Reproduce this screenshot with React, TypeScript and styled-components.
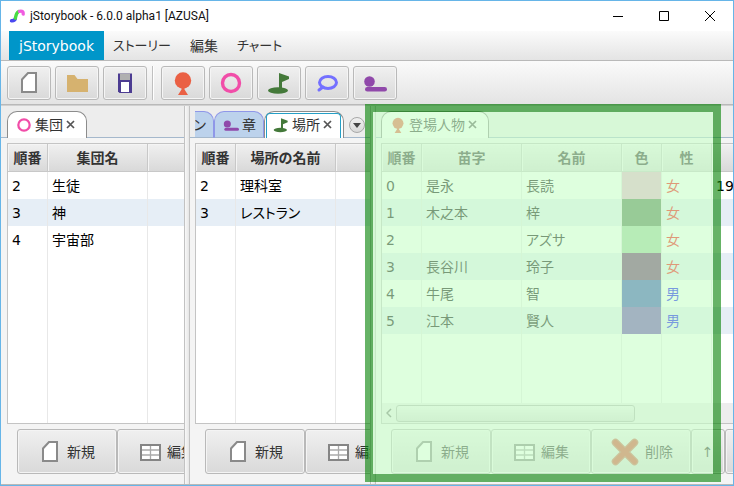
import React from "react";
import styled, { createGlobalStyle, css } from "styled-components";

const Global = createGlobalStyle`
  * { box-sizing: border-box; }
  body { margin: 0; }
  body, button {
    font-family: "DejaVu Sans", "Noto Sans CJK JP", sans-serif;
    font-size: 14px;
    line-height: 20px;
    color: #333;
  }
`;

const edge = "#b9b9b9";
const bevel = "linear-gradient(#f0f0f0, #d9d9d9)";

const Shell = styled.div`
  display: flex;
  flex-direction: column;
  height: 100vh;
  min-height: 360px;
  border: 1px solid #66b5e8;
  background: #f4f4f4;
  overflow: hidden;
`;

const TitleBar = styled.header`
  display: flex;
  align-items: center;
  height: 30px;
  flex: none;
  padding-left: 8px;
  background: #fff;
`;

const Title = styled.h1`
  flex: 1;
  margin: 0 0 0 4px;
  font: 400 12px/20px Roboto, sans-serif;
  color: #111;
  white-space: nowrap;
`;

const WindowButton = styled.button`
  display: grid;
  place-items: center;
  width: 46px;
  height: 30px;
  padding: 0;
  border: 0;
  background: transparent;
`;

const MenuBar = styled.nav`
  display: flex;
  flex: none;
  height: 30px;
  padding-left: 8px;
  border-bottom: 1px solid ${edge};
  background: linear-gradient(#fbfbfb, #e4e4e4);
`;

const MenuItem = styled.button<{ $active?: boolean; $kana?: boolean }>`
  padding: 0 ${(p) => (p.$kana ? 9 : 10)}px;
  border: 0;
  background: ${(p) => (p.$active ? "#0096c9" : "transparent")};
  color: ${(p) => (p.$active ? "#fff" : "#333")};
  font-size: ${(p) => (p.$kana ? 13 : 14)}px;
  font-feature-settings: "palt";
  white-space: nowrap;
`;

const ToolBar = styled.div`
  display: flex;
  flex: none;
  align-items: center;
  gap: 4px;
  height: 44px;
  padding: 0 6px;
  border-bottom: 1px solid ${edge};
  background: linear-gradient(#fafafa, #e4e4e4);
`;

const ToolButton = styled.button`
  display: grid;
  place-items: center;
  width: 44px;
  height: 34px;
  padding: 0;
  border: 1px solid ${edge};
  border-radius: 3px;
  background: ${bevel};
  box-shadow: inset 0 0 0 1px #f5f5f5;
`;

const Separator = styled.div`
  width: 2px;
  height: 34px;
  margin: 0 3px 0 1px;
  border-left: 1px solid #c0c0c0;
  background: #fff;
`;

const Workspace = styled.main`
  display: grid;
  grid-template-columns: 183fr 6px 180fr 6px 357fr;
  grid-template-rows: minmax(0, 1fr);
  flex: 1;
  min-height: 0;
  border-top: 1px solid #d0d0d0;
  border-bottom: 1px solid ${edge};
`;

const Divider = styled.div`
  border: solid #c2c2c2;
  border-width: 0 1px;
  background: linear-gradient(90deg, #f8f8f8, #e6e6e6);
`;

const Cell = styled.div`
  position: relative;
  display: flex;
  min-width: 0;
`;

const Panel = styled.section`
  display: flex;
  flex-direction: column;
  flex: 1;
  min-width: 0;
  overflow: hidden;
`;

const TabHeader = styled.div<{ $inset: number }>`
  display: flex;
  flex: none;
  align-items: flex-end;
  height: 32px;
  padding-left: ${(p) => p.$inset}px;
  border-bottom: 1px solid #a5b8cc;
  background: #ededed;
`;

const TabList = styled.div`
  display: flex;
  margin-bottom: -1px;
  overflow: hidden;
`;

const Tab = styled.button<{ $kind?: "idle" | "focus"; $clip?: boolean }>`
  position: relative;
  display: flex;
  flex: none;
  align-items: center;
  gap: 3px;
  height: 27px;
  padding: 0 11px 1px 8px;
  border: 1px solid #8c8c8c;
  border-bottom: 0;
  border-radius: 10px 10px 0 0;
  background: #fff;
  white-space: nowrap;
  ${(p) =>
    p.$kind === "idle" &&
    css`
      padding: 0 7px 0 8px;
      border-color: #8f97e8;
      border-bottom: 1px solid #a5b8cc;
      background: #bcd2ec;
    `}
  ${(p) =>
    p.$kind === "focus" &&
    css`
      &::after {
        content: "";
        position: absolute;
        inset: 1px 2px 0 1px;
        border: solid #259fc6;
        border-width: 1px 1px 0;
        border-radius: 4px 4px 0 0;
      }
    `}
  ${(p) =>
    p.$clip &&
    css`
      justify-content: flex-end;
      width: 19px;
      padding-left: 0;
      border-left: 0;
      border-top-left-radius: 0;
      overflow: hidden;
      font-feature-settings: "palt";
    `}
`;

const TabMenu = styled.button`
  display: grid;
  place-items: center;
  width: 16px;
  height: 16px;
  margin: 0 0 4px 5px;
  padding: 0;
  border: 1px solid #a8a8a8;
  border-radius: 50%;
  background: ${bevel};
`;

const Body = styled.div<{ $inset: number }>`
  display: flex;
  flex-direction: column;
  flex: 1;
  min-height: 0;
  padding: 5px 0 10px ${(p) => p.$inset}px;
`;

const TableBox = styled.div`
  display: flex;
  flex-direction: column;
  flex: 1;
  min-height: 0;
  border: solid #c4c4c4;
  border-width: 1px 0 1px 1px;
  background: #fff;
  overflow: hidden;
`;

const TableArea = styled.div`
  flex: 1;
  min-height: 0;
  overflow: hidden;
`;

const Grid = styled.table`
  width: 100%;
  height: 100%;
  table-layout: fixed;
  border-collapse: separate;
  border-spacing: 0;
`;

const Head = styled.th<{ $w?: number }>`
  width: ${(p) => (p.$w ? `${p.$w}px` : "auto")};
  height: 28px;
  padding: 0;
  border: solid #c8c8c8;
  border-width: 0 1px 1px 0;
  background: ${bevel};
  box-shadow: inset 1px 1px 0 #f4f4f4;
  font-weight: 700;
  white-space: nowrap;
  &:last-child {
    border-right: 0;
  }
`;

const Row = styled.tr<{ $odd: boolean }>`
  height: 27px;
  background: ${(p) => (p.$odd ? "#e6eef6" : "#fff")};
`;

const Data = styled.td<{ $ink?: string; $fill?: string }>`
  padding: 0 0 0 4px;
  border-right: 1px solid #e8e8e8;
  color: ${(p) => p.$ink ?? "#000"};
  background: ${(p) => p.$fill ?? "transparent"};
  font-feature-settings: "palt";
  white-space: nowrap;
  &:last-child {
    border-right: 0;
  }
`;

const ScrollBar = styled.div`
  display: flex;
  flex: none;
  align-items: center;
  height: 20px;
  background: #ededed;
`;

const ScrollArrow = styled.button`
  display: grid;
  place-items: center;
  width: 14px;
  height: 20px;
  padding: 0;
  border: 0;
  background: transparent;
`;

const Thumb = styled.div`
  width: 68%;
  height: 17px;
  border: 1px solid #b4b4b4;
  border-radius: 3px;
  background: linear-gradient(#f2f2f2, #dcdcdc);
`;

const Actions = styled.div`
  display: flex;
  flex: none;
  margin: 5px 0 0 10px;
`;

const Action = styled.button<{ $w?: number }>`
  display: flex;
  flex: none;
  align-items: center;
  justify-content: center;
  gap: 5px;
  width: ${(p) => p.$w ?? 100}px;
  height: 45px;
  padding: 0 1px 0 0;
  border: 1px solid ${edge};
  border-radius: 3px;
  background: ${bevel};
  box-shadow: inset 0 0 0 1px #f4f4f4;
  white-space: nowrap;
`;

const DropZone = styled.div`
  position: absolute;
  top: -2px;
  right: 12px;
  bottom: 2px;
  left: -11px;
  border: 8px solid rgba(0, 128, 0, 0.6);
  background: rgba(200, 255, 200, 0.6);
  background-clip: padding-box;
  pointer-events: none;
`;

type IconProps = { size?: number };

const AppIcon = () => (
  <svg width="17" height="14" viewBox="0 0 17 14" fill="none" strokeLinecap="round" strokeWidth="3.4">
    <path d="M2.5 11.8C5 12 6 11 6.4 9.4" stroke="#4a48f0" />
    <path d="M6.4 9.2C7 6 7.200 3.500 9.600 2.500" stroke="#48dc42" />
    <path d="M10.500 2.300C13 1.800 14.500 2.300 14.200 5" stroke="#f05ce0" />
  </svg>
);

const PageIcon = ({ size = 24 }: IconProps) => (
  <svg width={size} height={size} viewBox="0 0 24 24">
    <path d="M11 2H19V21H5V8.500Z" fill="#fff" stroke="#8a8a8a" strokeWidth="2" />
  </svg>
);

const FolderIcon = () => (
  <svg width="24" height="24" viewBox="0 0 24 24">
    <path d="M2 4H9.500L12.500 8H23V21H2Z" fill="#d6b26f" />
  </svg>
);

const FloppyIcon = () => (
  <svg width="24" height="24" viewBox="0 0 24 24">
    <path d="M5 2.500H19V22H6.500L5 20.500Z" fill="#4c3c92" />
    <path d="M7 2.500H17V9H7Z" fill="#b0b0b0" />
    <path d="M8 11H16V21H8Z" fill="#fff" />
  </svg>
);

const PersonIcon = ({ size = 24 }: IconProps) => (
  <svg width={size} height={size} viewBox="0 0 24 24" fill="#ea6044">
    <circle cx="12" cy="9.500" r="8.200" />
    <path d="M10.500 15H13.500V18.500L17 24H7L10.500 18.500Z" />
  </svg>
);

const RingIcon = ({ size = 24 }: IconProps) => (
  <svg width={size} height={size} viewBox="0 0 24 24">
    <circle cx="12" cy="12" r="8.500" fill="none" stroke="#f14da8" strokeWidth="3.400" />
  </svg>
);

const FlagIcon = ({ size = 24 }: IconProps) => (
  <svg width={size} height={size} viewBox="0 0 24 24" fill="#44793a">
    <ellipse cx="11" cy="19.500" rx="10" ry="3.200" />
    <path d="M12 2L22 5.500V8L15 11V20H12Z" />
  </svg>
);

const SpeechIcon = () => (
  <svg width="24" height="24" viewBox="0 0 24 24" fill="none" stroke="#7470ff" strokeWidth="3" strokeLinecap="round">
    <ellipse cx="13" cy="11.500" rx="8.500" ry="6" />
    <path d="M8 16L4 19" />
  </svg>
);

const SceneIcon = ({ size = 24 }: IconProps) => (
  <svg width={size} height={size} viewBox="0 0 24 24" fill="#9049aa">
    <circle cx="6.500" cy="10.500" r="5.300" />
    <rect x="2" y="16" width="22" height="4.600" rx="2.300" />
  </svg>
);

const SheetIcon = () => (
  <svg width="24" height="24" viewBox="0 0 24 24">
    <rect x="3" y="5" width="19" height="15" fill="#fff" />
    <path d="M3 10H22M3 15H22M12.500 5V20" stroke="#aaa" strokeWidth="1.300" />
    <rect x="3" y="5" width="19" height="15" fill="none" stroke="#858585" strokeWidth="2" />
  </svg>
);

const DeleteIcon = () => (
  <svg width="32" height="32" viewBox="0 0 32 32" fill="none" strokeLinecap="round">
    <path d="M7.500 6.500L26.500 25.500M26.500 6.500L7.500 25.500" stroke="#d06a58" strokeWidth="7.500" />
    <path d="M7.500 6.500L26.500 25.500M26.500 6.500L7.500 25.500" stroke="#dc4c38" strokeWidth="5" />
  </svg>
);

const CloseIcon = () => (
  <svg width="9" height="9" viewBox="0 0 9 9">
    <path d="M1 1L8 8M8 1L1 8" stroke="#555" strokeWidth="1.700" />
  </svg>
);

const tools = [
  { label: "新規", icon: <PageIcon /> },
  { label: "開く", icon: <FolderIcon /> },
  { label: "保存", icon: <FloppyIcon /> },
  null,
  { label: "登場人物", icon: <PersonIcon /> },
  { label: "集団", icon: <RingIcon /> },
  { label: "場所", icon: <FlagIcon /> },
  { label: "シーン", icon: <SpeechIcon /> },
  { label: "章", icon: <SceneIcon /> },
];

type Column = { name: string; width?: number };
type Value = string | { text?: string; ink?: string; fill?: string };

function DataTable({ columns, rows }: { columns: Column[]; rows: Value[][] }) {
  return (
    <TableArea>
      <Grid>
        <thead>
          <tr>
            {columns.map((c, i) => (
              <Head key={i} $w={c.width}>{c.name}</Head>
            ))}
          </tr>
        </thead>
        <tbody>
          {rows.map((row, r) => (
            <Row key={r} $odd={r % 2 === 1}>
              {columns.map((_, i) => {
                const v = row[i] ?? "";
                return typeof v === "string" ? (
                  <Data key={i}>{v}</Data>
                ) : (
                  <Data key={i} $ink={v.ink} $fill={v.fill}>{v.text}</Data>
                );
              })}
            </Row>
          ))}
          <tr>
            {columns.map((_, i) => (
              <Data key={i} />
            ))}
          </tr>
        </tbody>
      </Grid>
    </TableArea>
  );
}

const CommonActions = () => (
  <>
    <Action><PageIcon />新規</Action>
    <Action><SheetIcon />編集</Action>
  </>
);

const female = { text: "女", ink: "#ff0000" };
const male = { text: "男", ink: "#0000ff" };

const people: Value[][] = [
  ["0", "是永", "長読", { fill: "#ebb2cf" }, female, "19"],
  ["1", "木之本", "梓", { fill: "#527d4e" }, female],
  ["2", "", "アズサ", { fill: "#9ed09e" }, female],
  ["3", "長谷川", "玲子", { fill: "#692a69" }, female],
  ["4", "牛尾", "智", { fill: "#344bb6" }, male],
  ["5", "江本", "賢人", { fill: "#6c44b6" }, male],
];

export default function App() {
  return (
    <>
      <Global />
      <Shell>
        <TitleBar>
          <AppIcon />
          <Title>jStorybook - 6.0.0 alpha1 [AZUSA]</Title>
          <WindowButton aria-label="最小化">
            <svg width="10" height="10"><path d="M0 5.500H10" stroke="#000" /></svg>
          </WindowButton>
          <WindowButton aria-label="最大化">
            <svg width="10" height="10"><path d="M.5.5H9.500V9.500H.5Z" fill="none" stroke="#000" /></svg>
          </WindowButton>
          <WindowButton aria-label="閉じる">
            <svg width="10" height="10"><path d="M0 0L10 10M10 0L0 10" stroke="#000" /></svg>
          </WindowButton>
        </TitleBar>
        <MenuBar>
          <MenuItem $active>jStorybook</MenuItem>
          <MenuItem $kana>ストーリー</MenuItem>
          <MenuItem>編集</MenuItem>
          <MenuItem $kana>チャート</MenuItem>
        </MenuBar>
        <ToolBar>
          {tools.map((t, i) =>
            t ? <ToolButton key={i} aria-label={t.label}>{t.icon}</ToolButton> : <Separator key={i} />
          )}
        </ToolBar>
        <Workspace>
          <Cell>
            <Panel>
              <TabHeader $inset={6}>
                <TabList>
                  <Tab><RingIcon size={16} />集団<CloseIcon /></Tab>
                </TabList>
              </TabHeader>
              <Body $inset={6}>
                <TableBox>
                  <DataTable
                    columns={[{ name: "順番", width: 40 }, { name: "集団名", width: 100 }, { name: "" }]}
                    rows={[["2", "生徒"], ["3", "神"], ["4", "宇宙部"]]}
                  />
                </TableBox>
                <Actions><CommonActions /></Actions>
              </Body>
            </Panel>
          </Cell>
          <Divider />
          <Cell>
            <Panel>
              <TabHeader $inset={5}>
                <TabList>
                  <Tab $kind="idle" $clip>シーン</Tab>
                  <Tab $kind="idle"><SceneIcon size={16} />章</Tab>
                  <Tab $kind="focus"><FlagIcon size={16} />場所<CloseIcon /></Tab>
                </TabList>
                <TabMenu aria-label="タブ一覧">
                  <svg width="8" height="5"><path d="M0 0H8L4 5Z" fill="#444" /></svg>
                </TabMenu>
              </TabHeader>
              <Body $inset={5}>
                <TableBox>
                  <DataTable
                    columns={[{ name: "順番", width: 40 }, { name: "場所の名前", width: 100 }, { name: "" }]}
                    rows={[["2", "理科室"], ["3", "レストラン"]]}
                  />
                </TableBox>
                <Actions><CommonActions /></Actions>
              </Body>
            </Panel>
          </Cell>
          <Divider />
          <Cell>
            <Panel>
              <TabHeader $inset={5}>
                <TabList>
                  <Tab><PersonIcon size={16} />登場人物<CloseIcon /></Tab>
                </TabList>
              </TabHeader>
              <Body $inset={5}>
                <TableBox>
                  <DataTable
                    columns={[
                      { name: "順番", width: 40 },
                      { name: "苗字", width: 100 },
                      { name: "名前", width: 100 },
                      { name: "色", width: 40 },
                      { name: "性", width: 50 },
                      { name: "" },
                    ]}
                    rows={people}
                  />
                  <ScrollBar>
                    <ScrollArrow aria-label="左へ">
                      <svg width="6" height="10"><path d="M5 1L1 5L5 9" fill="none" stroke="#777" strokeWidth="1.500" /></svg>
                    </ScrollArrow>
                    <Thumb />
                  </ScrollBar>
                </TableBox>
                <Actions>
                  <CommonActions />
                  <Action><DeleteIcon />削除</Action>
                  <Action $w={34}>↑</Action>
                  <Action $w={34}>↓</Action>
                </Actions>
              </Body>
            </Panel>
            <DropZone />
          </Cell>
        </Workspace>
      </Shell>
    </>
  );
}
